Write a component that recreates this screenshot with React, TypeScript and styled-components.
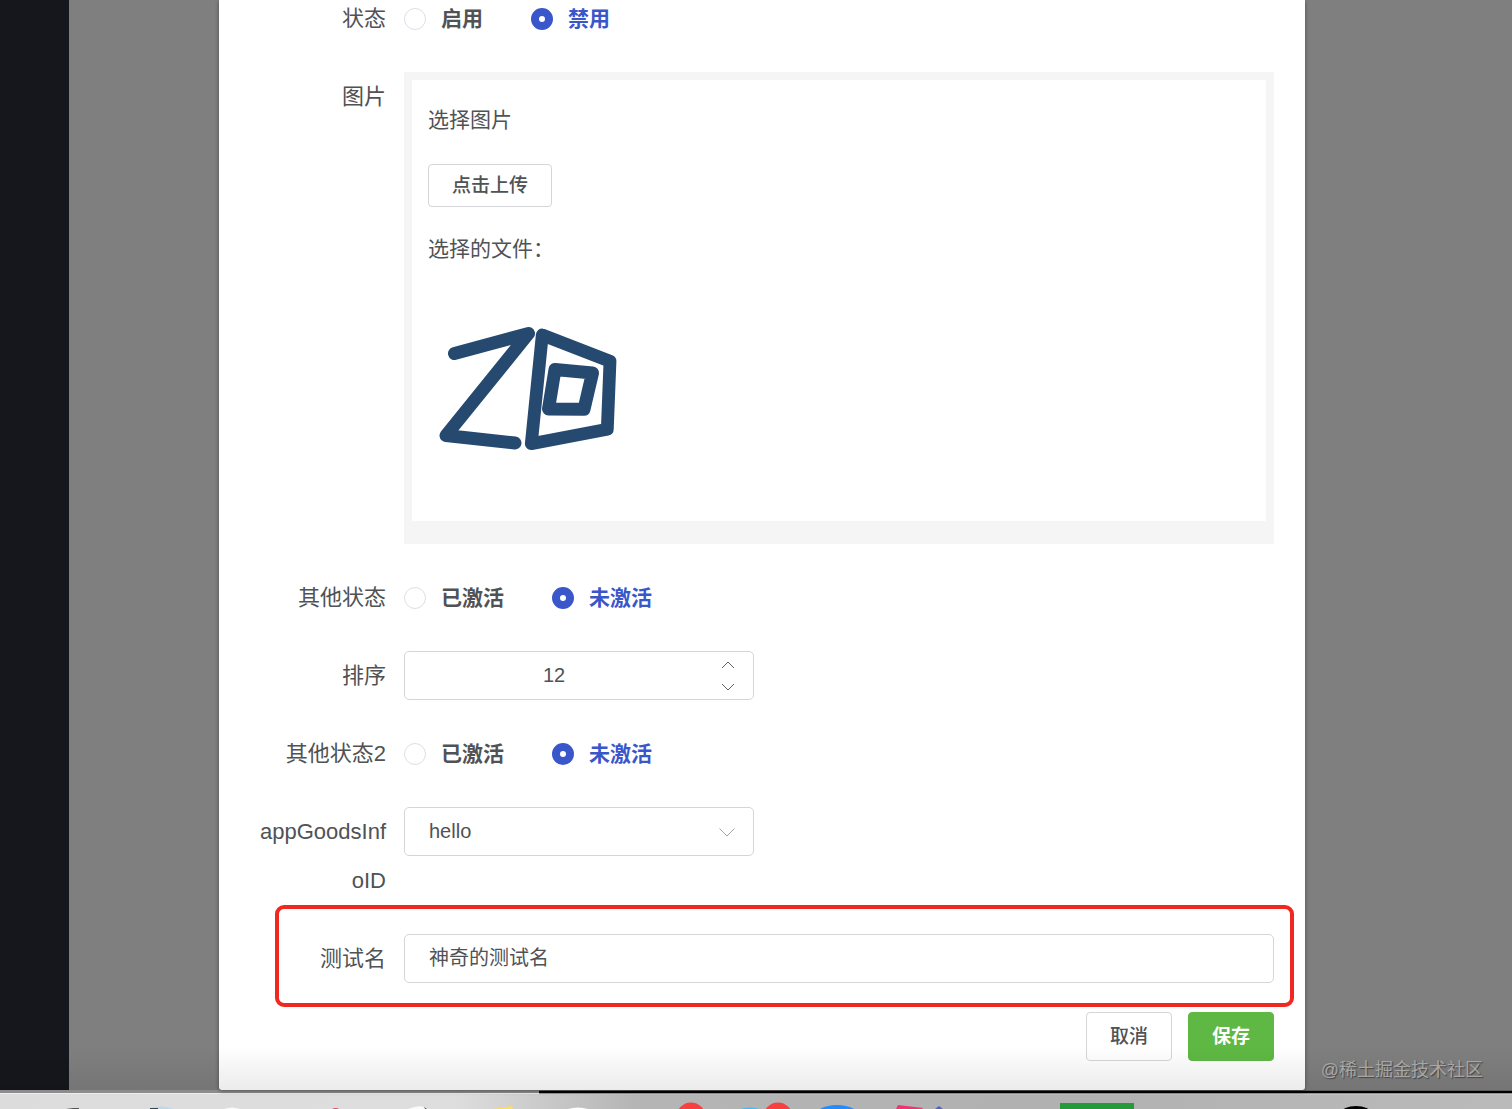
import React, { useState } from "react";
import styled, { createGlobalStyle, css } from "styled-components";

const ink = "#505255";
const blue = "#3a56cb";
const line = "#d3d5d9";

const GlobalStyle = createGlobalStyle`
  * { box-sizing: border-box; }
  body {
    margin: 0;
    color: ${ink};
    font-family: "Liberation Sans", "Noto Sans CJK SC", sans-serif;
  }
  button, input, select { font-family: inherit; color: inherit; }
`;

const Desktop = styled.div`
  display: flex;
  flex-direction: column;
  min-height: 100vh;
  overflow: hidden;
`;

const Screen = styled.div`
  position: relative;
  flex: 1;
  display: flex;
  background: #7f7f7f;
`;

const Sidebar = styled.aside`
  flex: 0 0 69px;
  background: #15171c;
`;

const Dialog = styled.main`
  flex: 1;
  min-width: 0;
  margin: 0 207px 0 150px;
  padding: 0 31px 29px;
  background: #fff;
  border-radius: 0 0 3px 3px;
  box-shadow: 0 1px 4px rgba(0, 0, 0, 0.4);
`;

const Form = styled.form`
  display: flex;
  flex-direction: column;
  gap: 29px;
  margin-top: -6px;
`;

const Row = styled.div`
  position: relative;
  display: flex;
  align-items: flex-start;
`;

const labelStyle = css`
  flex: 0 0 154px;
  padding-right: 18px;
  font-size: 22px;
  line-height: 49px;
  text-align: right;
  word-break: break-all;
`;

const Label = styled.label`
  ${labelStyle}
`;

const GroupLabel = styled.span`
  ${labelStyle}
`;

const RadioGroup = styled.div`
  display: flex;
  align-items: center;
  gap: 48px;
  height: 49px;
`;

const RadioLabel = styled.label<{ $on: boolean }>`
  display: flex;
  align-items: center;
  gap: 15px;
  font-size: 21px;
  line-height: 25px;
  font-weight: 700;
  color: ${(p) => (p.$on ? blue : ink)};
`;

const Radio = styled.input`
  appearance: none;
  width: 22px;
  height: 22px;
  margin: 0;
  border: 1px solid #dcdfe6;
  border-radius: 50%;
  background: #fff;
  &:checked {
    border: 8px solid ${blue};
  }
`;

const UploadFrame = styled.div`
  flex: 1;
  padding: 8px 8px 23px;
  background: #f5f5f5;
`;

const UploadBody = styled.div`
  display: flex;
  flex-direction: column;
  align-items: flex-start;
  padding: 23px 16px 32px;
  background: #fff;
`;

const Caption = styled.p`
  margin: 0;
  font-size: 21px;
  line-height: 33px;
`;

const Button = styled.button<{ $primary?: boolean; $small?: boolean }>`
  height: ${(p) => (p.$small ? 43 : 49)}px;
  margin: ${(p) => (p.$small ? "28px 0 25px" : "0")};
  padding: 0 23px;
  border: 1px solid ${(p) => (p.$primary ? "#5eb843" : line)};
  border-radius: 4px;
  background: ${(p) => (p.$primary ? "#5eb843" : "#fff")};
  color: ${(p) => (p.$primary ? "#fff" : ink)};
  font-size: 19px;
  line-height: 24px;
  font-weight: ${(p) => (p.$primary ? 700 : 500)};
`;

const Logo = styled.svg`
  display: block;
  width: 200px;
  height: 200px;
  margin-top: 24px;
  fill: none;
  stroke: #26496f;
  stroke-linecap: round;
  stroke-linejoin: round;
`;

const Field = styled.div<{ $wide?: boolean }>`
  position: relative;
  display: flex;
  align-items: center;
  flex: ${(p) => (p.$wide ? "1" : "0 0 350px")};
  height: 49px;
  border: 1px solid ${line};
  border-radius: 5px;
  background: #fff;
`;

const control = css`
  flex: 1;
  min-width: 0;
  height: 100%;
  margin: 0;
  border: 0;
  outline: 0;
  background: transparent;
  font-size: 20px;
  appearance: none;
`;

const TextInput = styled.input`
  ${control}
  padding: 0 24px 4px;
`;

const NumberInput = styled.input`
  ${control}
  padding: 0;
  text-align: center;
  appearance: textfield;
  &::-webkit-inner-spin-button { appearance: none; margin: 0; }
`;

const Select = styled.select`
  ${control}
  padding: 0 52px 2px 24px;
`;

const SelectArrow = styled.svg`
  position: absolute;
  right: 17px;
  width: 18px;
  height: 10px;
  fill: none;
  stroke: #a4a7ab;
  pointer-events: none;
`;

const Steppers = styled.div`
  display: flex;
  flex-direction: column;
  flex: 0 0 50px;
`;

const Step = styled.button`
  display: flex;
  align-items: center;
  justify-content: center;
  height: 22px;
  padding: 0;
  border: 0;
  background: transparent;
  svg {
    width: 14px;
    height: 8px;
    fill: none;
    stroke: #606266;
  }
`;

const Highlight = styled.div`
  position: absolute;
  inset: -29px -20px -24px 25px;
  border: 4px solid #f0281f;
  border-radius: 9px;
  pointer-events: none;
`;

const Footer = styled.footer`
  display: flex;
  justify-content: flex-end;
  gap: 16px;
`;

const Shade = styled.div`
  position: absolute;
  inset: auto 0 0;
  height: 44px;
  background: linear-gradient(transparent, rgba(0, 0, 0, 0.08));
  pointer-events: none;
`;

const Watermark = styled.span`
  position: absolute;
  right: 29px;
  bottom: 6px;
  font-size: 18px;
  line-height: 28px;
  color: #a6a6a6;
  text-shadow: 1px 1px 1px #444;
`;

const Dock = styled.div`
  height: 19px;
  overflow: hidden;
  background: linear-gradient(90deg, #dcdcdc 0, #dedede 30%, #b5b5b5 42%, #b1b1b1 70%, #bababa 100%);
  svg { display: block; }
`;

type ChoiceProps = { label: string; name: string; options: string[] };

function Choice({ label, name, options }: ChoiceProps) {
  const [value, setValue] = useState(1);
  return (
    <Row role="radiogroup" aria-labelledby={name}>
      <GroupLabel id={name}>{label}</GroupLabel>
      <RadioGroup>
        {options.map((text, i) => (
          <RadioLabel key={text} $on={value === i}>
            <Radio type="radio" name={name} checked={value === i} onChange={() => setValue(i)} />
            {text}
          </RadioLabel>
        ))}
      </RadioGroup>
    </Row>
  );
}

function DockIcons() {
  return (
    <Dock>
      <svg width="1512" height="19" viewBox="0 0 1512 19" aria-hidden="true">
        <path d="M0 0H539V3H0Z" fill="#8c8c8c" />
        <path d="M0 3H539V4H0Z" fill="#eee" />
        <path d="M539 0.5H1512V3.5H539Z" fill="#000" />
        <path d="M539 3.5H1512V4.5H539Z" fill="#ccc" />
        <path d="M66 19L73 18H79V19Z" fill="#555" />
        <path d="M148 19Q160 14 174 19Z" fill="#bcd9e6" />
        <path d="M150 18H158V19H150Z" fill="#345" />
        <path d="M224 19Q232 16 240 19Z" fill="#fafafa" />
        <path d="M332 19Q336 17 339 19Z" fill="#d9485f" />
        <path d="M408 19Q418 15 424 17L427 19Z" fill="#fafafa" />
        <path d="M424 17L427 19H425Z" fill="#555" />
        <path d="M493 19L512 16L513 19Z" fill="#fbdf58" />
        <path d="M568 19Q578 16 588 19Z" fill="#fff" />
        <circle cx="691" cy="27" r="14.5" fill="#f8403f" />
        <ellipse cx="750" cy="23" rx="14" ry="5.5" fill="#42b9f5" />
        <circle cx="778" cy="27" r="14.5" fill="#f8403f" />
        <ellipse cx="837" cy="27" rx="23" ry="12" fill="#228cff" />
        <path d="M896 19L898 15L923 18L922 19Z" fill="#f23373" />
        <path d="M935 19L939 16L943 19Z" fill="#5260c8" />
        <path d="M1060 13H1134V19H1060Z" fill="#259a3b" />
        <ellipse cx="1356" cy="23" rx="15" ry="7" fill="#000" />
      </svg>
    </Dock>
  );
}

export default function App() {
  const [order, setOrder] = useState(12);
  const [name, setName] = useState("神奇的测试名");

  return (
    <Desktop>
      <GlobalStyle />
      <Screen>
        <Sidebar />
        <Dialog>
          <Form onSubmit={(e) => e.preventDefault()}>
            <Choice label="状态" name="status" options={["启用", "禁用"]} />
            <Row>
              <GroupLabel>图片</GroupLabel>
              <UploadFrame>
                <UploadBody>
                  <Caption>选择图片</Caption>
                  <Button type="button" $small>点击上传</Button>
                  <Caption>选择的文件：</Caption>
                  <Logo viewBox="0 0 200 200" role="img" aria-label="ZD">
                    <path strokeWidth="13" d="M26.5 64.5L100.5 44.5L18 146.5L87 154" />
                    <path strokeWidth="12.8" d="M114.3 46L182 72.3L179.3 140.3L103.3 154.7Z" />
                    <path strokeWidth="13" d="M127 80.5L164.5 84L156 120.2L120.5 120Z" />
                  </Logo>
                </UploadBody>
              </UploadFrame>
            </Row>
            <Choice label="其他状态" name="other" options={["已激活", "未激活"]} />
            <Row>
              <Label htmlFor="order">排序</Label>
              <Field>
                <NumberInput
                  id="order"
                  type="number"
                  value={order}
                  onChange={(e) => setOrder(Number(e.target.value))}
                />
                <Steppers>
                  <Step type="button" aria-label="+" onClick={() => setOrder(order + 1)}>
                    <svg viewBox="0 0 14 8"><path d="M1 7L7 1L13 7" /></svg>
                  </Step>
                  <Step type="button" aria-label="-" onClick={() => setOrder(order - 1)}>
                    <svg viewBox="0 0 14 8"><path d="M1 1L7 7L13 1" /></svg>
                  </Step>
                </Steppers>
              </Field>
            </Row>
            <Choice label="其他状态2" name="other2" options={["已激活", "未激活"]} />
            <Row>
              <Label htmlFor="goods">appGoodsInfoID</Label>
              <Field>
                <Select id="goods">
                  <option>hello</option>
                </Select>
                <SelectArrow viewBox="0 0 18 10"><path d="M1.5 1.5L9 9L16.5 1.5" /></SelectArrow>
              </Field>
            </Row>
            <Row>
              <Label htmlFor="name">测试名</Label>
              <Field $wide>
                <TextInput id="name" value={name} onChange={(e) => setName(e.target.value)} />
              </Field>
              <Highlight />
            </Row>
            <Footer>
              <Button type="button">取消</Button>
              <Button type="submit" $primary>保存</Button>
            </Footer>
          </Form>
        </Dialog>
        <Shade />
        <Watermark>@稀土掘金技术社区</Watermark>
      </Screen>
      <DockIcons />
    </Desktop>
  );
}
